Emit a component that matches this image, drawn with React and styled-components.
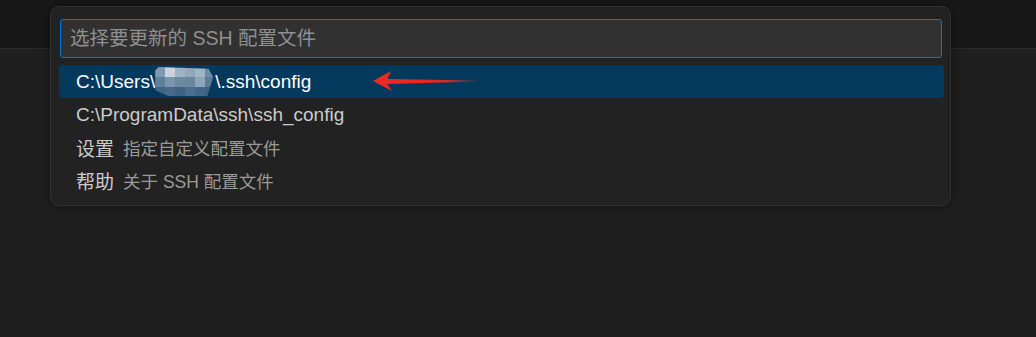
import React from "react";
import styled, { createGlobalStyle } from "styled-components";

const Global = createGlobalStyle`
  html, body { margin: 0; padding: 0; background: #1f1f1f; }
  body {
    width: 1036px; height: 337px; overflow: hidden;
    font-family: "Liberation Sans", "Noto Sans CJK SC", sans-serif;
  }
  #root { height: 100%; }
`;

const Page = styled.div`
  position: relative;
  height: 337px;
  display: flex;
  flex-direction: column;
`;

const TopBar = styled.div`
  height: 48px;
  background: #181818;
  border-bottom: 1px solid #2b2b2b;
`;

const Editor = styled.div`
  flex: 1;
  background: #1f1f1f;
`;

const QuickPick = styled.div`
  position: absolute;
  left: 50px;
  top: 6px;
  width: 901px;
  box-sizing: border-box;
  background: #222222;
  border: 1px solid #313131;
  border-radius: 9px;
  box-shadow: 0 0 12px rgba(0, 0, 0, 0.45);
  padding: 12px 6px 8px 8px;
  display: flex;
  flex-direction: column;
`;

const Header = styled.div`
  padding: 0 2px 0 1px;
`;

const Input = styled.input`
  display: block;
  width: 100%;
  box-sizing: border-box;
  height: 39px;
  margin: 0;
  padding: 0 9px;
  background: #313131;
  border: 1px solid #0078d4;
  border-radius: 3px;
  outline: none;
  color: #cccccc;
  font-family: "Liberation Sans", "Noto Sans CJK SC", sans-serif;
  font-size: 19.5px;
  &::placeholder { color: #8f8f8f; }
`;

const List = styled.div`
  margin-top: 7px;
  display: flex;
  flex-direction: column;
`;

const Row = styled.div`
  position: relative;
  height: 33px;
  display: flex;
  align-items: center;
  padding: 0 17px;
  border-radius: 4px;
  background: ${(p) => (p.$selected ? "#04395e" : "transparent")};
  color: ${(p) => (p.$selected ? "#ffffff" : "#cccccc")};
  font-size: 19px;
  white-space: nowrap;
`;

const Label = styled.span`
  display: inline-flex;
  align-items: center;
`;

const Description = styled.span`
  margin-left: 9px;
  font-size: 17.5px;
  color: #9a9a9a;
`;

const Mosaic = styled.span`
  display: inline-grid;
  grid-template-columns: repeat(6, 10px);
  grid-template-rows: repeat(3, 10px);
  width: 58px;
  height: 29px;
  overflow: hidden;
  margin: 0 2px 0 0;
  clip-path: polygon(6% 0, 92% 6%, 100% 35%, 90% 100%, 22% 100%, 0 80%, 0 12%);
`;

const Cell = styled.span`
  background: ${(p) => p.$c};
`;

const Arrow = styled.svg`
  position: absolute;
  left: 313px;
  top: 4px;
  width: 110px;
  height: 26px;
  pointer-events: none;
`;

const mosaicColors = [
  "#7f9ab0", "#c9d3dc", "#9fb3c3", "#93a9bb", "#a3b5c4", "#6e8ba4",
  "#5f7f9b", "#7a95ac", "#6c89a2", "#6a879f", "#8ea4b7", "#5b7b97",
  "#3f6484", "#46698a", "#3e6383", "#4c6f8e", "#41668a", "#3d6181",
];

export default function App() {
  return (
    <>
      <Global />
      <Page>
        <TopBar />
        <Editor />
        <QuickPick>
          <Header>
            <Input placeholder="选择要更新的 SSH 配置文件" readOnly />
          </Header>
          <List>
            <Row $selected>
              <Label>
                C:\Users\
                <Mosaic>
                  {mosaicColors.map((c, i) => (
                    <Cell key={i} $c={c} />
                  ))}
                </Mosaic>
                \.ssh\config
              </Label>
              <Arrow viewBox="0 0 110 26">
                <defs>
                  <linearGradient id="tail" x1="0" x2="1" y1="0" y2="0">
                    <stop offset="0" stopColor="#ee2a22" />
                    <stop offset="0.7" stopColor="#e8231d" />
                    <stop offset="1" stopColor="#e8231d" stopOpacity="0.15" />
                  </linearGradient>
                </defs>
                <path
                  d="M1 12 L19 2 L15.5 10 L106 11.6 L106 12.6 L15.5 15 L20 22 Z"
                  fill="url(#tail)"
                />
              </Arrow>
            </Row>
            <Row>
              <Label>C:\ProgramData\ssh\ssh_config</Label>
            </Row>
            <Row>
              <Label>设置</Label>
              <Description>指定自定义配置文件</Description>
            </Row>
            <Row>
              <Label>帮助</Label>
              <Description>关于 SSH 配置文件</Description>
            </Row>
          </List>
        </QuickPick>
      </Page>
    </>
  );
}
